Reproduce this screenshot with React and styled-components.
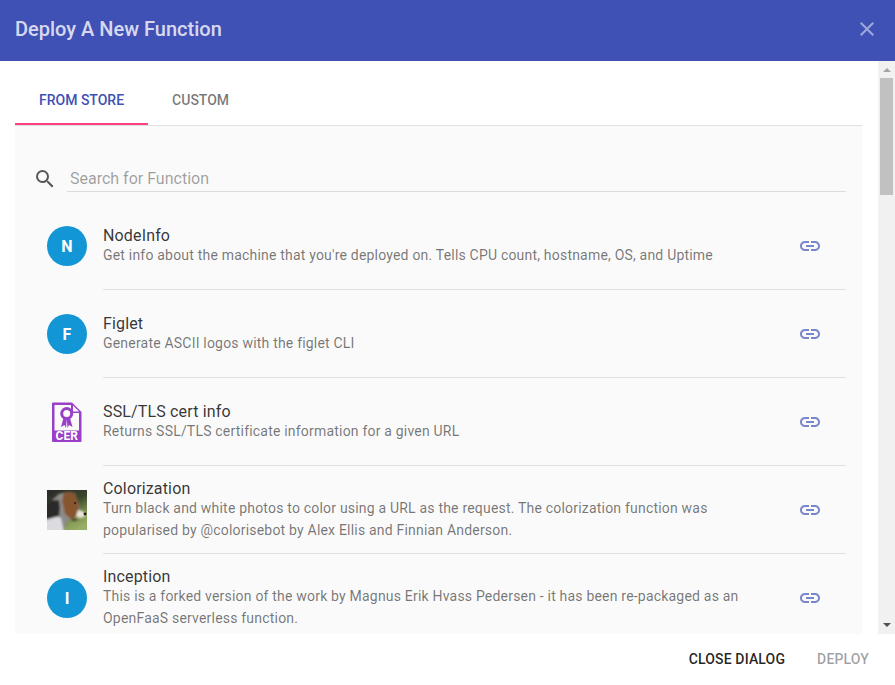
import React from 'react';
import styled, { createGlobalStyle } from 'styled-components';
import { MdClose, MdLink, MdSearch } from 'react-icons/md';

const GlobalStyle = createGlobalStyle`
    html, body {
        margin: 0;
        padding: 0;
        height: 100%;
        overflow: hidden;
        background: #fff;
        font-family: Roboto, 'Liberation Sans', sans-serif;
    }
`;

const functions = [
    {
        name: 'NodeInfo',
        letter: 'N',
        desc: ["Get info about the machine that you're deployed on. Tells CPU count, hostname, OS, and Uptime"],
    },
    { name: 'Figlet', letter: 'F', desc: ['Generate ASCII logos with the figlet CLI'] },
    { name: 'SSL/TLS cert info', icon: 'cert', desc: ['Returns SSL/TLS certificate information for a given URL'] },
    {
        name: 'Colorization',
        icon: 'dog',
        desc: [
            'Turn black and white photos to color using a URL as the request. The colorization function was',
            'popularised by @colorisebot by Alex Ellis and Finnian Anderson.',
        ],
    },
    {
        name: 'Inception',
        letter: 'I',
        desc: [
            'This is a forked version of the work by Magnus Erik Hvass Pedersen - it has been re-packaged as an',
            'OpenFaaS serverless function.',
        ],
    },
];

const CertIcon = () => (
    <svg width='40' height='40' viewBox='0 0 40 40'>
        <path d='M6 0.500h19l9.500 9.500v29a1 1 0 0 1-1 1H6a1 1 0 0 1-1-1V1.500a1 1 0 0 1 1-1z' fill='#9a3fc8' />
        <path d='M7.500 3H24v8h8v17.500H7.500z' fill='#fafafa' />
        <path d='M26 3.500l6 6h-6z' fill='#fafafa' />
        <circle cx='19.700' cy='11.500' r='5' fill='none' stroke='#9a3fc8' strokeWidth='3' />
        <path d='M16.500 16l-2.500 9 3.500-2 1.500 3 .7-8.500zM23 16l2.500 9-3.500-2-1.500 3-.7-8.500z' fill='#9a3fc8' />
        <text x='19.700' y='38' textAnchor='middle' fontFamily='Roboto, sans-serif' fontSize='12' fontWeight='700' fill='#fff'>
            CER
        </text>
    </svg>
);

const DogPhoto = () => (
    <svg width='40' height='40' viewBox='0 0 40 40'>
        <defs>
            <linearGradient id='dogBg' x1='0.2' y1='0' x2='0.7' y2='1'>
                <stop offset='0' stopColor='#2c2d2a' />
                <stop offset='0.4' stopColor='#39452b' />
                <stop offset='0.75' stopColor='#7d9450' />
                <stop offset='1' stopColor='#98ad66' />
            </linearGradient>
            <filter id='soft' x='-10%' y='-10%' width='120%' height='120%'>
                <feGaussianBlur stdDeviation='0.800' />
            </filter>
        </defs>
        <rect width='40' height='40' fill='url(#dogBg)' />
        <g filter='url(#soft)'>
            <path d='M0 40V18L5 10 12 4 20 2 28 3 31 12 33 20 26 28 20 32 17 40z' fill='#8c8a8a' />
            <path d='M-2 42V27L8 26 14 28 17 42z' fill='#dcdce0' />
            <path d='M-2 30V16L5 10 12 10 13 18 12 26 5 28z' fill='#2b2a2a' />
            <path d='M11 5L17 3 16 10 16 21 13 24 13 13z' fill='#8f8d8a' />
            <path d='M17 2L28 3 31 12 32 21 30 26 24 29 18 24 15 11z' fill='#87552e' />
            <path d='M31 20L35 21 38 23 38 26.500 33 28 29 26.500z' fill='#ebe5da' />
            <path d='M23 29L33 28.500 27 31z' fill='#3f2a1c' />
        </g>
        <circle cx='38' cy='24' r='1.400' fill='#1c1a18' />
        <circle cx='28' cy='13' r='1' fill='#20160f' />
    </svg>
);

const App = () => (
    <Dialog>
        <GlobalStyle />
        <Header>
            <Title>Deploy A New Function</Title>
            <CloseButton>
                <MdClose size={24} />
            </CloseButton>
        </Header>
        <Middle>
            <Content>
                <Tabs>
                    <Tab $active>FROM STORE</Tab>
                    <Tab>CUSTOM</Tab>
                </Tabs>
                <Panel>
                    <SearchRow>
                        <SearchIcon>
                            <MdSearch size={24} />
                        </SearchIcon>
                        <SearchInput placeholder='Search for Function' />
                    </SearchRow>
                    {functions.map((fn) => (
                        <Item key={fn.name}>
                            <Media>
                                {fn.letter && <Avatar>{fn.letter}</Avatar>}
                                {fn.icon === 'cert' && <CertIcon />}
                                {fn.icon === 'dog' && <DogPhoto />}
                            </Media>
                            <ItemBody>
                                <ItemText>
                                    <ItemName>{fn.name}</ItemName>
                                    {fn.desc.map((line) => (
                                        <ItemDesc key={line}>{line}</ItemDesc>
                                    ))}
                                </ItemText>
                                <LinkIcon>
                                    <MdLink size={24} />
                                </LinkIcon>
                            </ItemBody>
                        </Item>
                    ))}
                </Panel>
            </Content>
            <Scrollbar>
                <ArrowUp />
                <Thumb />
                <Track />
                <ArrowDown />
            </Scrollbar>
        </Middle>
        <Footer>
            <FooterButton>CLOSE DIALOG</FooterButton>
            <FooterButton $disabled>DEPLOY</FooterButton>
        </Footer>
    </Dialog>
);

const Dialog = styled.div`
    display: flex;
    flex-direction: column;
    width: 895px;
    height: 685px;
    background: #fff;
    overflow: hidden;
`;

const Header = styled.header`
    display: flex;
    align-items: center;
    justify-content: space-between;
    flex: 0 0 61px;
    padding: 0 16px 3px 15px;
    box-sizing: border-box;
    background: #3f51b5;
`;

const Title = styled.h2`
    margin: 0;
    font-size: 20px;
    font-weight: 500;
    color: rgba(255, 255, 255, 0.8);
`;

const CloseButton = styled.div`
    display: flex;
    color: rgba(255, 255, 255, 0.5);
`;

const Middle = styled.div`
    display: flex;
    flex: 0 0 573px;
    overflow: hidden;
`;

const Content = styled.div`
    flex: 1;
    min-width: 0;
    padding: 16px 16px 0 15px;
`;

const Tabs = styled.div`
    display: flex;
    height: 48px;
    border-bottom: 1px solid #e0e0e0;
`;

const Tab = styled.div`
    display: flex;
    align-items: center;
    justify-content: center;
    height: 48px;
    padding: 0 24px;
    box-sizing: border-box;
    font-size: 14px;
    font-weight: 500;
    color: ${(p) => (p.$active ? '#3f51b5' : 'rgba(0, 0, 0, 0.54)')};
    border-bottom: 2px solid ${(p) => (p.$active ? '#ff4081' : 'transparent')};
`;

const Panel = styled.div`
    background: #fafafa;
    padding-top: 36px;
`;

const SearchRow = styled.div`
    display: flex;
    align-items: center;
    height: 30px;
    margin-bottom: 10px;
    padding: 0 16px 0 18px;
`;

const SearchIcon = styled.div`
    display: flex;
    flex: 0 0 24px;
    margin: 4px 10px 0 0;
    color: rgba(0, 0, 0, 0.65);
`;

const SearchInput = styled.input`
    flex: 1;
    min-width: 0;
    height: 30px;
    box-sizing: border-box;
    padding: 5px 0 2px 3px;
    border: none;
    border-bottom: 1px solid #dcdcdc;
    outline: none;
    background: transparent;
    font-family: inherit;
    font-size: 16px;

    &::placeholder {
        color: rgba(0, 0, 0, 0.38);
    }
`;

const Item = styled.div`
    display: flex;
    height: 88px;
    padding: 0 16px 0 32px;
`;

const Media = styled.div`
    display: flex;
    align-items: center;
    justify-content: center;
    flex: 0 0 40px;
    margin-right: 16px;
`;

const Avatar = styled.div`
    display: flex;
    align-items: center;
    justify-content: center;
    width: 40px;
    height: 40px;
    border-radius: 50%;
    background: #1296d6;
    color: #fff;
    font-size: 16px;
    font-weight: 700;
`;

const ItemBody = styled.div`
    display: flex;
    align-items: center;
    flex: 1;
    min-width: 0;
    border-bottom: 1px solid #e0e0e0;
`;

const ItemText = styled.div`
    flex: 1;
    min-width: 0;
    padding-bottom: 1px;
`;

const ItemName = styled.div`
    font-size: 16px;
    line-height: 22px;
    letter-spacing: 0.15px;
    color: rgba(0, 0, 0, 0.8);
`;

const ItemDesc = styled.div`
    font-size: 14px;
    line-height: 22px;
    margin-top: -3px;
    letter-spacing: 0.2px;
    color: rgba(0, 0, 0, 0.54);
    white-space: nowrap;

    & + & {
        margin-top: 0;
    }
`;

const LinkIcon = styled.div`
    display: flex;
    margin-right: 24px;
    color: #7986cb;
`;

const Scrollbar = styled.div`
    display: flex;
    flex-direction: column;
    align-items: center;
    flex: 0 0 17px;
    background: #f1f1f1;
`;

const ArrowUp = styled.div`
    flex: none;
    width: 0;
    height: 0;
    margin: 7px 0 6px;
    border-left: 4px solid transparent;
    border-right: 4px solid transparent;
    border-bottom: 4px solid #a3a3a3;
`;

const Thumb = styled.div`
    flex: 0 0 117px;
    width: 13px;
    background: #c1c1c1;
`;

const Track = styled.div`
    flex: 1;
`;

const ArrowDown = styled.div`
    flex: none;
    width: 0;
    height: 0;
    margin: 5px 0 7px;
    border-left: 4px solid transparent;
    border-right: 4px solid transparent;
    border-top: 4px solid #505050;
`;

const Footer = styled.footer`
    display: flex;
    align-items: center;
    justify-content: flex-end;
    flex: 1;
    padding: 0 26px 2px 0;
    gap: 32px;
`;

const FooterButton = styled.div`
    font-size: 14px;
    font-weight: 500;
    letter-spacing: 0.15px;
    color: ${(p) => (p.$disabled ? 'rgba(0, 0, 0, 0.38)' : 'rgba(0, 0, 0, 0.87)')};
`;

export default App;
